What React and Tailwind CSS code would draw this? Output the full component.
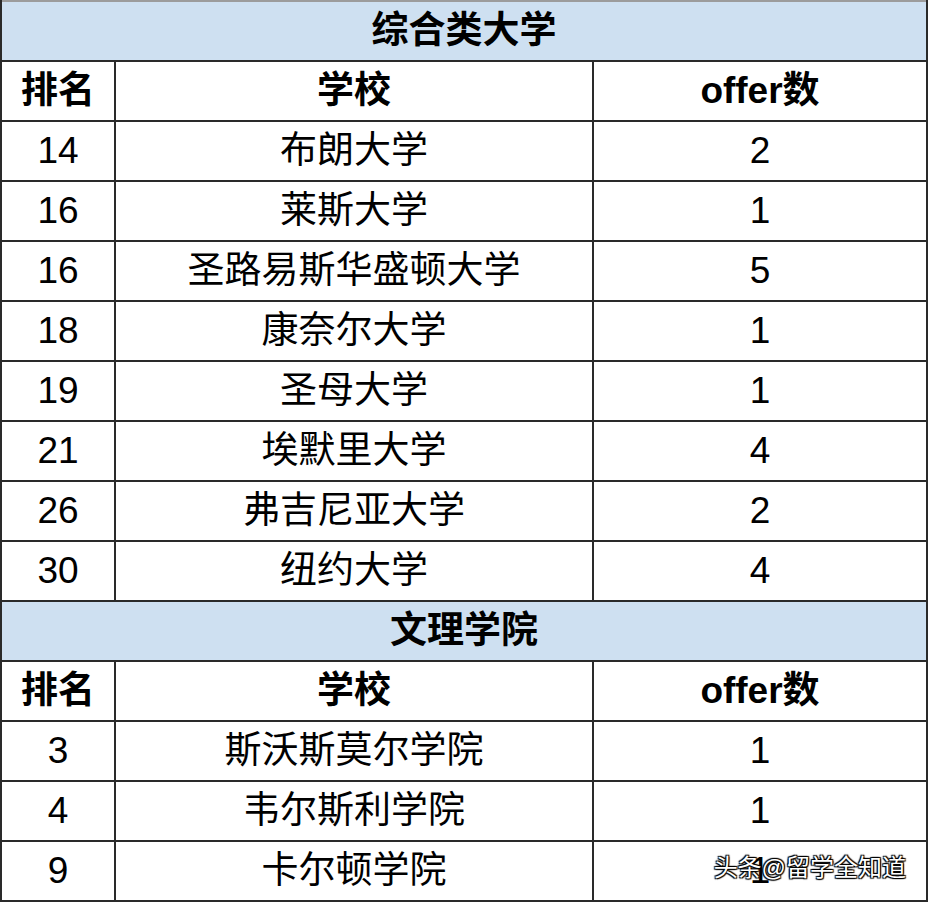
const zonghe = [
  ["14", "布朗大学", "2"],
  ["16", "莱斯大学", "1"],
  ["16", "圣路易斯华盛顿大学", "5"],
  ["18", "康奈尔大学", "1"],
  ["19", "圣母大学", "1"],
  ["21", "埃默里大学", "4"],
  ["26", "弗吉尼亚大学", "2"],
  ["30", "纽约大学", "4"],
];

const wenli = [
  ["3", "斯沃斯莫尔学院", "1"],
  ["4", "韦尔斯利学院", "1"],
  ["9", "卡尔顿学院", "1"],
];

function SectionTitle({ title, first }) {
  return (
    <div
      className={`flex h-[60px] items-center justify-center border-t-2 bg-[#cee0f1] text-[37px] font-bold ${
        first ? "border-[#9c9c9c]" : "border-[#2a2a2a]"
      }`}
    >
      {title}
    </div>
  );
}

function Row({ cells, bold }) {
  return (
    <div className={`flex h-[60px] border-t-2 border-[#2a2a2a] text-[37px] ${bold ? "font-bold" : ""}`}>
      <div className="flex w-[112px] items-center justify-center">{cells[0]}</div>
      <div className="flex w-[478px] items-center justify-center border-l-2 border-[#2a2a2a]">{cells[1]}</div>
      <div className="flex flex-1 items-center justify-center border-l-2 border-[#2a2a2a]">{cells[2]}</div>
    </div>
  );
}

export default function App() {
  return (
    <div
      className="relative w-[928px] bg-white text-black"
      style={{ fontFamily: '"Liberation Sans", "Noto Sans CJK SC", sans-serif' }}
    >
      <div className="border-x-2 border-b-2 border-[#2a2a2a]">
        <SectionTitle title="综合类大学" first />
        <Row cells={["排名", "学校", "offer数"]} bold />
        {zonghe.map((r, i) => (
          <Row key={i} cells={r} />
        ))}
        <SectionTitle title="文理学院" />
        <Row cells={["排名", "学校", "offer数"]} bold />
        {wenli.map((r, i) => (
          <Row key={i} cells={r} />
        ))}
      </div>
      {/* watermark sits over the last cell */}
      <div className="absolute right-[22px] top-[853px] text-[24px] leading-[30px] text-white [text-shadow:0_0_1px_#000,1px_1px_1px_#000,-1px_-1px_1px_#000,1px_-1px_1px_#000,-1px_1px_1px_#000]">
        头条@留学全知道
      </div>
    </div>
  );
}
